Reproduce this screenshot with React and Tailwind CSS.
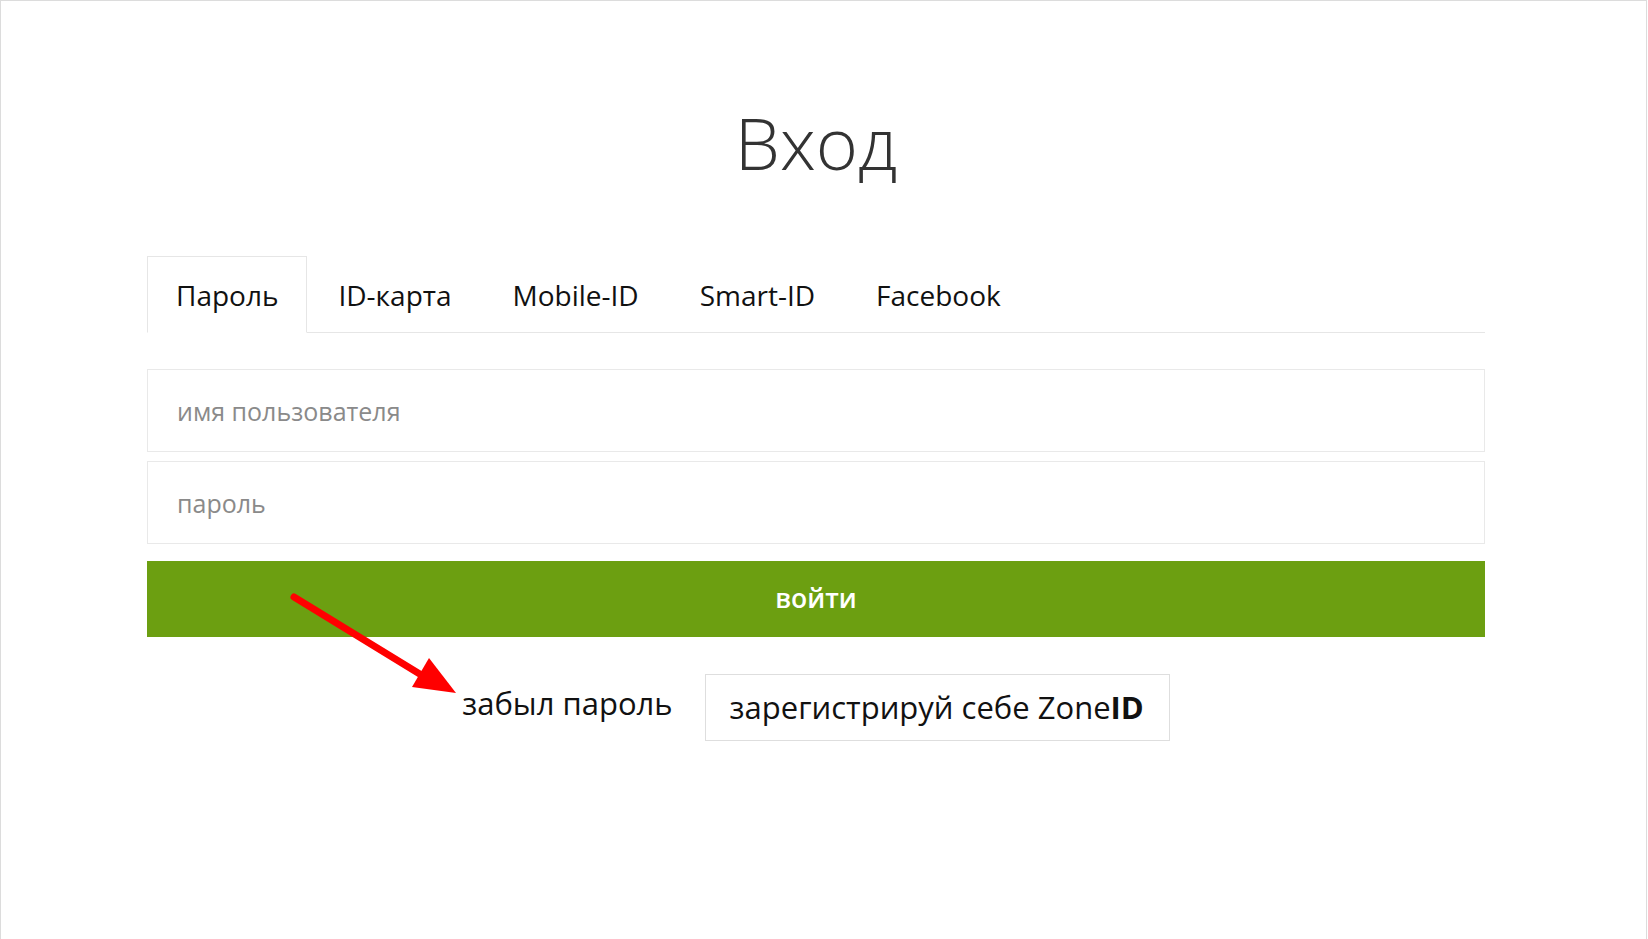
import React from "react";

const tabs = ["Пароль", "ID-карта", "Mobile-ID", "Smart-ID", "Facebook"];

export default function App() {
  return (
    <div
      className="relative w-[1647px] h-[939px] bg-white border-t border-l border-r border-[#dcdcdc] text-[#111]"
      style={{ fontFamily: '"Open Sans", "Noto Sans", sans-serif' }}
    >
      <div className="ml-[146px] w-[1338px] pt-[105px]">
        <h1 className="text-center text-[72px] leading-[72px] font-light text-[#333]">Вход</h1>

        <div className="mt-[78px] flex border-b border-[#e6e6e6]">
          {tabs.map((t, i) => (
            <div
              key={t}
              className={
                i === 0
                  ? "-mb-px h-[77px] px-[28px] flex items-center border border-[#e6e6e6] border-b-white bg-white text-[28px]"
                  : "h-[76px] pl-[31px] pr-[30px] flex items-center text-[28px]"
              }
            >
              <span className="pt-[1px]">{t}</span>
            </div>
          ))}
        </div>

        <div className="mt-[36px] flex flex-col gap-[9px]">
          <input
            className="h-[83px] border border-[#e9e9e9] px-[29px] text-[25px] outline-none placeholder:text-[#8a8a8a]"
            placeholder="имя пользователя"
          />
          <input
            type="password"
            className="h-[83px] border border-[#e9e9e9] px-[29px] text-[25px] outline-none placeholder:text-[#8a8a8a]"
            placeholder="пароль"
          />
        </div>

        <button className="mt-[17px] w-full h-[76px] bg-[#6c9f11] text-white text-[26.5px] font-semibold">
          войти
        </button>

        <div className="mt-[37px] flex justify-center items-center gap-[32px]">
          <span className="text-[31px] text-[#111] pb-[8px]">забыл пароль</span>
          <div className="h-[67px] pl-[24px] pr-[25px] flex items-center border border-[#dedede] text-[31px] text-[#111]">
            <span>
              зарегистрируй себе Zone<b className="font-bold">ID</b>
            </span>
          </div>
        </div>
      </div>

      <svg className="absolute left-0 top-0 pointer-events-none" width="1647" height="939">
        <line x1="293" y1="596" x2="422" y2="675" stroke="#ff0000" strokeWidth="7" strokeLinecap="round" />
        <polygon points="428,657 411,686 455,692" fill="#ff0000" />
      </svg>
    </div>
  );
}
